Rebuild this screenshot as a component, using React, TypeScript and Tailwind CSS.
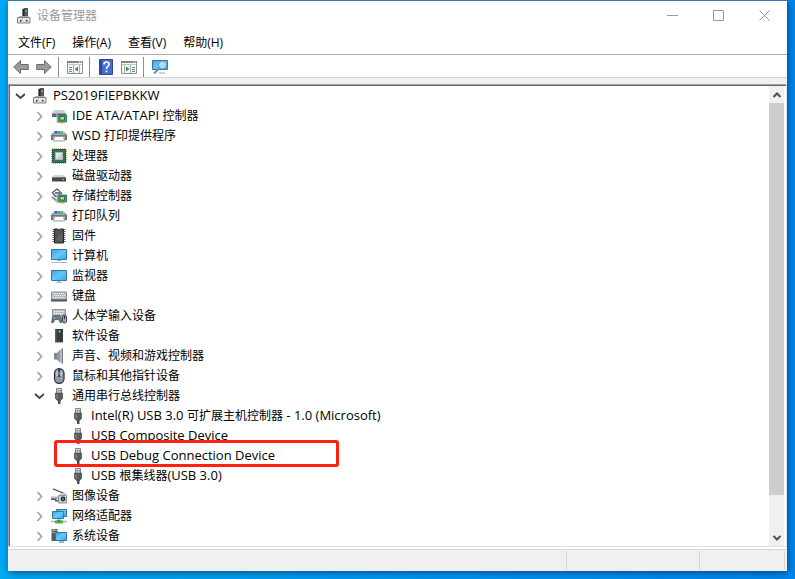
import { useState } from 'react';
import type { ReactNode } from 'react';

type DeviceNode = {
  label: string;
  icon: string;
  level: number;
  open?: boolean;
  marked?: boolean;
};

const devices: DeviceNode[] = [
  { label: 'PS2019FIEPBKKW', icon: 'root', level: 0, open: true },
  { label: 'IDE ATA/ATAPI 控制器', icon: 'ide', level: 1, open: false },
  { label: 'WSD 打印提供程序', icon: 'printer', level: 1, open: false },
  { label: '处理器', icon: 'cpu', level: 1, open: false },
  { label: '磁盘驱动器', icon: 'disk', level: 1, open: false },
  { label: '存储控制器', icon: 'storage', level: 1, open: false },
  { label: '打印队列', icon: 'printer', level: 1, open: false },
  { label: '固件', icon: 'firmware', level: 1, open: false },
  { label: '计算机', icon: 'computer', level: 1, open: false },
  { label: '监视器', icon: 'monitor', level: 1, open: false },
  { label: '键盘', icon: 'keyboard', level: 1, open: false },
  { label: '人体学输入设备', icon: 'hid', level: 1, open: false },
  { label: '软件设备', icon: 'software', level: 1, open: false },
  { label: '声音、视频和游戏控制器', icon: 'sound', level: 1, open: false },
  { label: '鼠标和其他指针设备', icon: 'mouse', level: 1, open: false },
  { label: '通用串行总线控制器', icon: 'usb', level: 1, open: true },
  { label: 'Intel(R) USB 3.0 可扩展主机控制器 - 1.0 (Microsoft)', icon: 'usb', level: 2 },
  { label: 'USB Composite Device', icon: 'usb', level: 2 },
  { label: 'USB Debug Connection Device', icon: 'usb', level: 2, marked: true },
  { label: 'USB 根集线器(USB 3.0)', icon: 'usb', level: 2 },
  { label: '图像设备', icon: 'camera', level: 1, open: false },
  { label: '网络适配器', icon: 'network', level: 1, open: false },
  { label: '系统设备', icon: 'system', level: 1, open: false },
];

const menus = ['文件(F)', '操作(A)', '查看(V)', '帮助(H)'];

const indents = ['pl-0', 'pl-[19px]', 'pl-[38px]'];

const printer = (
  <>
    <path d="M2 6V4q0-1 1-1h10q1 0 1 1v2z" fill="#d5d9db" />
    <path d="M3.500 3h4v3h-4z" fill="#1d62d6" />
    <path d="M6 3h3v3H6z" fill="#2aa7f0" />
    <path d="M9 3h3v2.500H9z" fill="#37c88a" />
    <path d="M0 7l1.500-2h13L16 7v5h-2.500V8.500h-11V12H0z" fill="#6f7478" />
    <path d="M1.500 5.500h13L15.500 7H.5z" fill="#a9aeb1" />
    <path d="M3.500 8.500h9l1 4.500h-11z" fill="#fff" stroke="#84898d" strokeWidth=".8" />
    <path d="M3 12.500h10" stroke="#c3c8cb" />
  </>
);

const board = (
  <>
    <path d="M6.500 7H15.500v7h-9z" fill="#4ba276" stroke="#1f6a45" strokeWidth=".8" />
    <path d="M9 8.500h4.500v3.500H9z" fill="#a9d8bb" stroke="#164e31" strokeWidth=".7" />
    <path d="M8.500 14h5v1.500h-5z" fill="#e0a92c" />
    <path d="M6 6v9.500" stroke="#c6cacd" />
  </>
);

const screenGradient = (
  <linearGradient id="screen" x1="0" y1="0" x2="1" y2="1">
    <stop offset="0" stopColor="#36a3ec" />
    <stop offset=".5" stopColor="#66c8fc" />
    <stop offset="1" stopColor="#2ea5f5" />
  </linearGradient>
);

const icons: Record<string, ReactNode> = {
  root: (
    <>
      <path d="M6.500 1.500L8.500 0H12v9H6.500z" fill="#55585a" />
      <path d="M6.500 1.500L8.500 0v9h-2z" fill="#2c2e30" />
      <path d="M9.500 2.500h1.500V4H9.500z" fill="#61e86f" />
      <path d="M1.500 9.500L4 8h7.500L14 9.500z" fill="#a9adb0" />
      <path d="M1.500 9.500h12.500v5.500H1.500z" fill="#dfe1e3" stroke="#7e8285" />
      <path d="M4 12h1.500v1.500H4zM10 12h1.500v1.500H10z" fill="#25282a" />
    </>
  ),
  ide: (
    <>
      <path d="M1 5.500L3 2h10l2 3.500z" fill="#c9cdd0" />
      <path d="M1 5.500h14V9H1z" fill="#63686c" />
      <path d="M1 5h14v1H1z" fill="#9a9fa2" />
      {board}
    </>
  ),
  printer,
  cpu: (
    <>
      <path d="M1 1h14v14H1z" fill="none" stroke="#c9a74b" strokeWidth="2" strokeDasharray="1 1" />
      <path d="M1.500 1.500h13v13h-13z" fill="#35705a" stroke="#2b5c49" />
      <path d="M4.500 4.500h7v7h-7z" fill="#e3e6e5" stroke="#a9bdb3" />
      <path d="M5 11l6-6v6z" fill="#c9cfcd" />
    </>
  ),
  disk: (
    <>
      <path d="M1 9.500L3 7h10l2 2.500z" fill="#d2d5d7" />
      <path d="M1 9.500h14v4H1z" fill="#46494c" />
      <path d="M1 9h14v1H1z" fill="#77797c" />
      <path d="M11.500 11H13v1h-1.500z" fill="#6ae977" />
    </>
  ),
  storage: (
    <>
      <path d="M8.500 3L6 1 1.500 4.500l3 4 2-.5M4 5h5.500" fill="none" stroke="#4f5356" strokeWidth="1.300" />
      <path d="M8 3l3 2-3 2" fill="none" stroke="#4f5356" />
      <path d="M1 9l5 4" stroke="#8b8f92" strokeWidth="1.800" />
      {board}
    </>
  ),
  firmware: (
    <>
      <path d="M3 1v14M13 1v14" stroke="#5c5c5c" strokeWidth="3" strokeDasharray="1 1" />
      <path d="M3.500 1h3q1.500 2 3 0h3v14h-9z" fill="#505254" stroke="#28292a" />
      <path d="M5 12l6-8v9z" fill="#6a6d6f" opacity=".6" />
    </>
  ),
  computer: (
    <>
      {screenGradient}
      <path d="M.5 1.500h15v10H.5z" fill="url(#screen)" stroke="#39779d" />
      <path d="M6 12h4v1H6z" fill="#9bb5c5" />
      <path d="M0 14.500h16" stroke="#a8bbc8" />
    </>
  ),
  monitor: (
    <>
      {screenGradient}
      <path d="M.5 2.500h15v10H.5z" fill="url(#screen)" stroke="#39779d" />
      <path d="M7 13h2v1H7z" fill="#8ba9bd" />
      <path d="M5 14.500h6" stroke="#afc2cd" />
    </>
  ),
  keyboard: (
    <>
      <path d="M.5 4h15v8H.5z" fill="#b3b9be" stroke="#8b9298" />
      <path d="M2 5.500h12M3 7.500h11M2 9.500h12" stroke="#f1f3f4" strokeDasharray="1.200 .8" />
      <path d="M0 11.500h16v2H0z" fill="#4b5156" />
    </>
  ),
  hid: (
    <>
      <path d="M1.500 1.500h13V8h-13z" fill="#b9bfc4" stroke="#8d9499" />
      <path d="M3 3.500h10M3 5.500h10" stroke="#f6f7f8" strokeDasharray="1.200 .8" />
      <path d="M.5 14.500l1-6 2-1H8l2 1 .8 6H9L7.500 11.500H4L2.500 14.500z" fill="#6c7681" stroke="#4b535b" strokeWidth=".7" />
      <path d="M2.500 9h2v1.500h-2z" fill="#52aef0" />
      <path d="M7.500 8.500H9V10H7.500z" fill="#e45a41" />
      <rect x="11.500" y="7" width="4" height="8" rx="2" fill="#a2abb3" stroke="#333d46" />
      <path d="M13.500 8v3" stroke="#222c35" />
    </>
  ),
  software: (
    <>
      <path d="M4 1h8v13.500H4z" fill="#393c3e" />
      <path d="M4 1v13.500h1.500V1z" fill="#5b5f62" />
      <path d="M7.500 2.500h2v2h-2z" fill="#50ed5f" />
      <path d="M4 14h8v1H4z" fill="#b0b3b5" />
    </>
  ),
  sound: (
    <>
      <path d="M3 5h3.500v6.500H3z" fill="#7b838b" />
      <path d="M6 5l4.500-4.500H12v15h-1.500L6 11.500z" fill="#b3b9bf" />
      <path d="M6 5l3-3v12.500l-3-3z" fill="#929aa2" />
      <path d="M11.500.5v15" stroke="#737c85" />
    </>
  ),
  mouse: (
    <>
      <rect x="3.500" y=".7" width="9.500" height="14.600" rx="4.500" fill="#909ba7" stroke="#303943" strokeWidth="1.300" />
      <path d="M5 4q3-4 6 0v4H5z" fill="#b8c2cc" />
      <path d="M8.200 1v8" stroke="#27313a" strokeWidth="1.800" />
      <path d="M8.200 4v3" stroke="#69aee4" />
    </>
  ),
  usb: (
    <>
      <path d="M5.500.5h5v5h-5z" fill="#dcdedf" stroke="#818487" />
      <path d="M6.700 2h1v1.500h-1zM8.700 2h1v1.500h-1z" fill="#55585a" />
      <path d="M4.500 5h7v5.500l-2 2h-3l-2-2z" fill="#5b5e5f" stroke="#454748" strokeWidth=".7" />
      <path d="M6 6v4.500" stroke="#8a8d8f" />
      <path d="M7 12h2.500v4H7z" fill="#4c4e50" />
    </>
  ),
  camera: (
    <>
      <path d="M2 .8L14.500 6" stroke="#55595c" strokeWidth="1.300" />
      <path d="M8 7.500L10 5h4l1.500 2.500z" fill="#c6cacc" />
      <path d="M0 8.500h7V11H0z" fill="#b5babd" />
      <path d="M0 10.500h5.500v1.500H0zM4 12h3v1.500H4z" fill="#555a5e" />
      <path d="M7.500 7.500h8V15h-8z" fill="#cbd0d2" stroke="#8b9196" />
      <circle cx="12" cy="11" r="2.400" fill="#26323a" />
      <circle cx="12" cy="11" r="1" fill="#4fa790" />
    </>
  ),
  network: (
    <>
      {screenGradient}
      <path d="M5.500 1.500h10v7h-10z" fill="url(#screen)" stroke="#39779d" />
      <path d="M1.500 3.500h11v7h-11z" fill="url(#screen)" stroke="#39779d" />
      <path d="M0 13.500h16" stroke="#a8b7c0" strokeWidth="1.500" />
      <path d="M4 12.500h8v3H4z" fill="#45b649" />
      <path d="M6.500 11.500h3v2h-3z" fill="#2f9137" />
    </>
  ),
  system: (
    <>
      {screenGradient}
      <path d="M.5 1h6v12h-6z" fill="#54595c" />
      <path d="M1 2.500h5M1 4.500h4" stroke="#a2a8ab" />
      <path d="M2 1h1.500v1H2z" fill="#58e865" />
      <path d="M4.500 4.500h11v8h-11z" fill="url(#screen)" stroke="#39779d" />
      <path d="M8 14h5" stroke="#89a4b5" strokeWidth="1.500" />
    </>
  ),
  back: (
    <path d="M.7 8L7.500 1.500v4h7.800v5H7.500v4z" fill="#9b9b9b" stroke="#6c6c6c" />
  ),
  forward: (
    <path d="M15.300 8L8.500 1.500v4H.7v5h7.800v4z" fill="#9b9b9b" stroke="#6c6c6c" />
  ),
  hidePane: (
    <>
      <path d="M.5 2.500h15v12H.5z" fill="#f7f7f7" stroke="#8b9094" />
      <path d="M0 2h16v2H0z" fill="#80868a" />
      <path d="M12 3h1M14 3h1" stroke="#fff" />
      <path d="M1 5.500h14" stroke="#c1c5c8" />
      <path d="M2 8.500h3M2 10.500h3M2 12.500h3" stroke="#6a84a0" />
      <path d="M6.500 6v8M12.500 6v8" stroke="#a6abae" />
      <path d="M11 7.500v5L7.500 10z" fill="#2c9c36" />
    </>
  ),
  showPane: (
    <>
      <path d="M.5 2.500h15v12H.5z" fill="#f7f7f7" stroke="#8b9094" />
      <path d="M0 2h16v2H0z" fill="#80868a" />
      <path d="M12 3h1M14 3h1" stroke="#fff" />
      <path d="M1 5.500h14" stroke="#c1c5c8" />
      <path d="M11 8.500h3M11 10.500h3M11 12.500h3" stroke="#6a84a0" />
      <path d="M3.500 6v8M9.500 6v8" stroke="#a6abae" />
      <path d="M5 7.500v5L8.500 10z" fill="#2c9c36" />
    </>
  ),
  help: (
    <>
      <path d="M1.500.5h13v15h-13z" fill="#4a6bd0" stroke="#2c479b" />
      <path d="M2 1h2v14H2z" fill="#2848a5" />
      <path d="M6 5.500Q6 3 8.500 3T11 5.300q0 1.300-1.300 2.100Q8.500 8 8.500 10M8.500 11.500v1.800" fill="none" stroke="#fff" strokeWidth="1.700" />
    </>
  ),
  scan: (
    <>
      {screenGradient}
      <path d="M.5 1.500h15v9H.5z" fill="url(#screen)" stroke="#39779d" />
      <path d="M7 14h6" stroke="#91a8b6" />
      <circle cx="10.500" cy="6" r="4" fill="#b9e6fb" fillOpacity=".8" stroke="#6b99b5" />
      <path d="M7.700 9L2 14.500" stroke="#6f8fa5" strokeWidth="1.800" />
    </>
  ),
};

function Icon({ name }: { name: string }) {
  return (
    <svg viewBox="0 0 16 16" className="h-4 w-4 shrink-0" aria-hidden="true">
      {icons[name]}
    </svg>
  );
}

function Label({ text }: { text: string }) {
  // Latin runs are set one size up so that they sit level with the Chinese glyphs
  const runs = text.split(/([\x20-\x7e]+)/).filter(Boolean);
  return (
    <span className="whitespace-pre">
      {runs.map((run, index) => (
        <span key={index} className={/^[\x20-\x7e]/.test(run) ? 'text-[13px]' : 'text-xs'}>{run}</span>
      ))}
    </span>
  );
}

function ToolButton({ name, label }: { name: string; label: string }) {
  return (
    <button type="button" aria-label={label} className="flex h-5 w-[23px] items-center justify-center hover:bg-sky-100">
      <Icon name={name} />
    </button>
  );
}

function Separator() {
  return <div className="mr-1 ml-[3px] h-5 w-px bg-[#8f8f8f]" />;
}

function TreeRow({ node, onToggle }: { node: DeviceNode; onToggle: () => void }) {
  return (
    <li role="treeitem" aria-level={node.level + 1} aria-expanded={node.open} className={`relative flex h-5 items-center ${indents[node.level]}`}>
      {node.open === undefined ? (
        <span className="w-5 shrink-0" />
      ) : (
        <button type="button" aria-label={node.label} onClick={onToggle} className="flex h-5 w-5 shrink-0 items-center justify-center">
          <svg viewBox="0 0 10 10" className="h-2.5 w-2.5" fill="none" strokeWidth="1.800">
            {node.open ? <path d="M1 3l4.500 4L10 3" stroke="#404040" /> : <path d="M3.500 1l4 4.500-4 4.500" stroke="#a6a6a6" />}
          </svg>
        </button>
      )}
      <div className="flex items-center gap-[5px] pl-0.5">
        <Icon name={node.icon} />
        <Label text={node.label} />
      </div>
      {node.marked && (
        <div className="pointer-events-none absolute -top-1.5 left-11 h-[27px] w-[285px] rounded-[3px] border-3 border-[#ff2012]" />
      )}
    </li>
  );
}

export default function App() {
  const [nodes, setNodes] = useState(devices);

  const toggle = (index: number) => {
    setNodes((prev) => prev.map((node, i) => (i === index ? { ...node, open: !node.open } : node)));
  };

  // a row is shown only while every ancestor above it is open
  let closedLevel = Infinity;
  const rows = nodes.map((node, index) => {
    if (node.level > closedLevel) {
      return null;
    }
    closedLevel = node.open === false ? node.level : Infinity;
    return <TreeRow key={node.label} node={node} onToggle={() => toggle(index)} />;
  });

  return (
    <div className="flex min-h-screen flex-col bg-linear-to-r from-[#00aaf5] to-[#0086ee] px-2 pb-2 font-['Open_Sans','Noto_Sans_CJK_SC',sans-serif] text-xs text-black">
      <div className="flex flex-1 flex-col border-t border-[#2f78ac] bg-white shadow-[1px_2px_7px_rgba(0,30,70,0.6)]">
        <header className="flex h-[29px] items-center">
          <div className="flex flex-1 items-center gap-[5px] pl-2 text-[#999]">
            <Icon name="root" />
            <h1>设备管理器</h1>
          </div>
          <button type="button" aria-label="最小化" className="flex h-full w-[46px] items-center justify-center">
            <svg viewBox="0 0 11 11" className="h-[11px] w-[11px]" stroke="#999"><path d="M0 5.500h11" /></svg>
          </button>
          <button type="button" aria-label="最大化" className="flex h-full w-[46px] items-center justify-center">
            <svg viewBox="0 0 11 11" className="h-[11px] w-[11px]" fill="none" stroke="#999"><path d="M.5.5h10v10H.5z" /></svg>
          </button>
          <button type="button" aria-label="关闭" className="flex h-full w-[46px] items-center justify-center">
            <svg viewBox="0 0 11 11" className="h-[11px] w-[11px]" stroke="#999"><path d="M.5.5l10 10M10.500.5l-10 10" /></svg>
          </button>
        </header>

        <nav className="flex h-[25px] items-center gap-px border-b border-[#adadad] pt-0.5 pl-0.5">
          {menus.map((menu) => (
            <button key={menu} type="button" className="h-full px-2 hover:bg-sky-100">{menu}</button>
          ))}
        </nav>

        <div className="flex h-[23px] items-center border-b border-[#d5d5d5] pt-0.5 pl-px">
          <ToolButton name="back" label="后退" />
          <ToolButton name="forward" label="前进" />
          <Separator />
          <ToolButton name="hidePane" label="显示/隐藏控制台树" />
          <Separator />
          <ToolButton name="help" label="帮助" />
          <ToolButton name="showPane" label="显示/隐藏操作窗格" />
          <Separator />
          <ToolButton name="scan" label="扫描检测硬件改动" />
        </div>
        <div className="h-1.5 bg-[#f0f0f0]" />

        <main className="flex flex-1 flex-col border border-t-[#a0a0a0] border-r-[#e3e3e3] border-b-[#e0e0e0] border-l-[#a0a0a0]">
          <div className="flex flex-1 border-t border-l border-[#696969] pr-0.5">
            <ul role="tree" aria-label="设备管理器" className="min-w-0 flex-1">
              {rows}
            </ul>
            <div className="flex w-[15px] flex-col bg-[#f0f0f0]">
              <button type="button" aria-label="向上滚动" className="flex h-[17px] items-center justify-center">
                <svg viewBox="0 0 10 10" className="h-2.5 w-2.5" fill="none" stroke="#505050" strokeWidth="2"><path d="M1.500 7L5 3.500 8.500 7" /></svg>
              </button>
              <div className="flex-1">
                <div className="h-[92%] bg-[#cdcdcd]" />
              </div>
              <button type="button" aria-label="向下滚动" className="flex h-[17px] items-center justify-center">
                <svg viewBox="0 0 10 10" className="h-2.5 w-2.5" fill="none" stroke="#505050" strokeWidth="2"><path d="M1.500 3L5 6.500 8.500 3" /></svg>
              </button>
            </div>
          </div>
        </main>

        <footer className="mt-0.5 flex h-[22px] border-t border-[#d7d7d7] bg-[#f0f0f0] py-px pr-0.5">
          <div className="flex-1 border-r border-[#d7d7d7]" />
          <div className="w-[133px] border-r border-[#d7d7d7]" />
          <div className="w-[85px] border-r border-[#d7d7d7]" />
        </footer>
      </div>
    </div>
  );
}
